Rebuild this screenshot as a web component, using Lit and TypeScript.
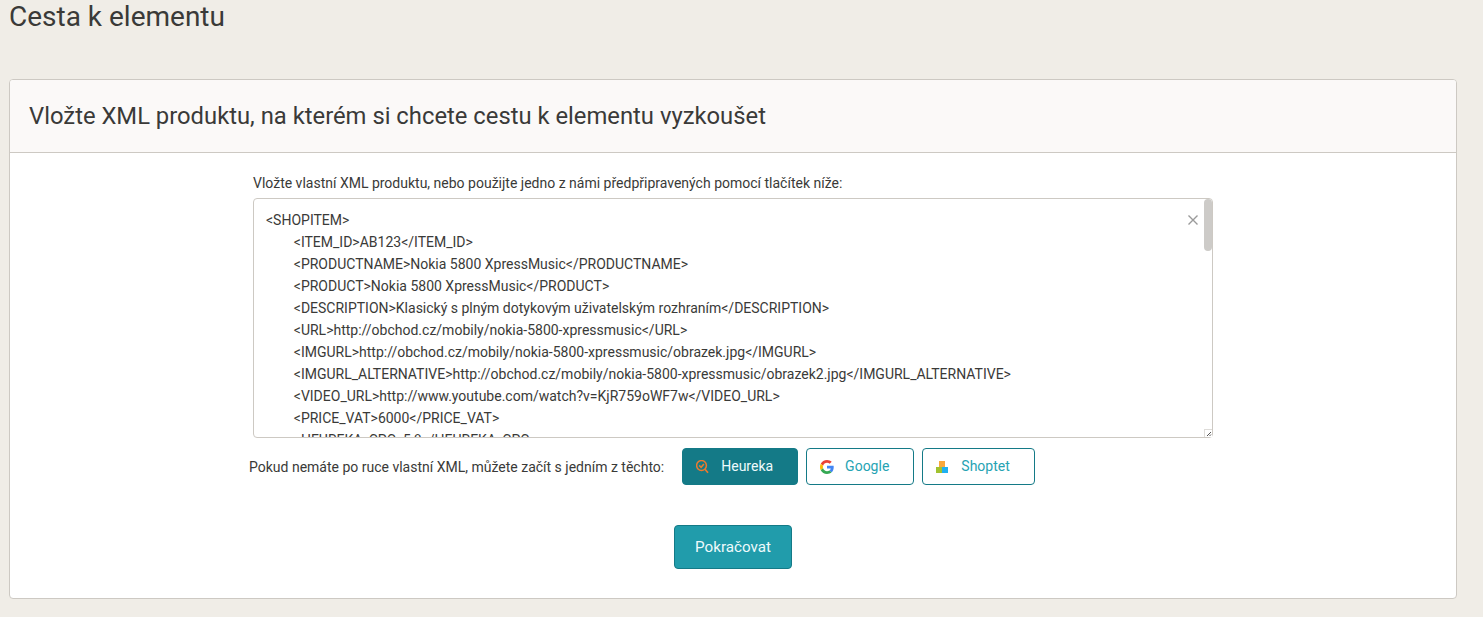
import { LitElement, html, css } from "lit";
import { customElement } from "lit/decorators.js";

const XML = `<SHOPITEM>
	<ITEM_ID>AB123</ITEM_ID>
	<PRODUCTNAME>Nokia 5800 XpressMusic</PRODUCTNAME>
	<PRODUCT>Nokia 5800 XpressMusic</PRODUCT>
	<DESCRIPTION>Klasický s plným dotykovým uživatelským rozhraním</DESCRIPTION>
	<URL>http://obchod.cz/mobily/nokia-5800-xpressmusic</URL>
	<IMGURL>http://obchod.cz/mobily/nokia-5800-xpressmusic/obrazek.jpg</IMGURL>
	<IMGURL_ALTERNATIVE>http://obchod.cz/mobily/nokia-5800-xpressmusic/obrazek2.jpg</IMGURL_ALTERNATIVE>
	<VIDEO_URL>http://www.youtube.com/watch?v=KjR759oWF7w</VIDEO_URL>
	<PRICE_VAT>6000</PRICE_VAT>
	<HEUREKA_CPC>5,8</HEUREKA_CPC>
	<MANUFACTURER>NOKIA</MANUFACTURER>
	<CATEGORYTEXT>Elektronika | Mobilní telefony</CATEGORYTEXT>
	<EAN>6417182041488</EAN>
	<DELIVERY_DATE>2</DELIVERY_DATE>
</SHOPITEM>`;

@customElement("app-root")
export class AppRoot extends LitElement {
  static styles = css`
    :host {
      display: block;
      height: 617px;
      overflow: hidden;
      background: #f0ede7;
      font-family: Roboto, sans-serif;
      font-size: 14px;
      color: #3a3a38;
      box-sizing: border-box;
      padding: 0 26px 0 9px;
    }
    h1 {
      margin: 0;
      height: 79px;
      font-size: 28px;
      font-weight: 400;
      line-height: 34px;
      color: #3a3a38;
    }
    .card {
      height: 520px;
      box-sizing: border-box;
      background: #fff;
      border: 1px solid #cdc9c3;
      border-radius: 4px;
      overflow: hidden;
    }
    .head {
      height: 73px;
      box-sizing: border-box;
      background: #fbf9f8;
      border-bottom: 1px solid #cdc9c3;
      padding: 0 19px;
      display: flex;
      align-items: center;
    }
    h2 {
      margin: 0;
      font-size: 23.8px;
      font-weight: 400;
      line-height: 32px;
      color: #3a3a38;
    }
    .body {
      display: flex;
      flex-direction: column;
      align-items: center;
    }
    .inner {
      width: 960px;
    }
    .label {
      display: block;
      height: 45px;
      line-height: 20px;
      padding-top: 20px;
      box-sizing: border-box;
    }
    .area {
      position: relative;
      height: 240px;
    }
    textarea {
      display: block;
      width: 100%;
      height: 100%;
      box-sizing: border-box;
      margin: 0;
      padding: 10px 12px;
      border: 1px solid #cdc9c3;
      border-radius: 4px;
      font: 14px/22px Roboto, sans-serif;
      color: #3a3a38;
      background: #fff;
      outline: none;
      resize: none;
      overflow: hidden;
    }
    .clear {
      position: absolute;
      top: 16px;
      right: 14px;
      width: 12px;
      height: 12px;
      display: block;
    }
    .thumb {
      position: absolute;
      top: 1px;
      right: 1px;
      width: 8px;
      height: 52px;
      background: #cdcbc8;
      border-radius: 4px;
    }
    .grip {
      position: absolute;
      right: 1px;
      bottom: 1px;
      width: 8px;
      height: 8px;
      box-sizing: border-box;
      background: #fff;
      border-left: 1px solid #dedcd9;
      border-top: 1px solid #dedcd9;
      display: block;
    }
    .row {
      display: flex;
      align-items: center;
      gap: 8px;
      margin: 10px 0 0 -4px;
    }
    .row span.text {
      margin-right: 10px;
    }
    .btn {
      height: 37px;
      box-sizing: border-box;
      display: inline-flex;
      align-items: center;
      gap: 11px;
      padding: 0 24px 0 13px;
      border: 1px solid #147a87;
      border-radius: 4px;
      background: #fff;
      color: #26a3b3;
      font: 14px Roboto, sans-serif;
    }
    .btn .lbl {
      position: relative;
      top: -1px;
    }
    .btn.active {
      background: #147a87;
      color: #eefafc;
    }
    .btn svg {
      width: 14px;
      height: 14px;
      display: block;
      flex: none;
    }
    .next {
      display: block;
      margin: 40px auto 0;
      width: 118px;
      height: 44px;
      box-sizing: border-box;
      border: 1px solid #147a87;
      border-radius: 4px;
      background: #219cab;
      color: #eefafc;
      font: 15.2px Roboto, sans-serif;
    }
  `;

  render() {
    return html`
      <h1>Cesta k elementu</h1>
      <section class="card">
        <div class="head"><h2>Vložte XML produktu, na kterém si chcete cestu k elementu vyzkoušet</h2></div>
        <div class="body">
          <div class="inner">
            <label class="label">Vložte vlastní XML produktu, nebo použijte jedno z námi předpřipravených pomocí tlačítek níže:</label>
            <div class="area">
              <textarea .value=${XML} spellcheck="false"></textarea>
              <svg class="clear" viewBox="0 0 12 12"><path d="M1.500 1.500l9 9M10.500 1.500l-9 9" stroke="#9a9a9a" stroke-width="1.400" fill="none"/></svg>
              <div class="thumb"></div>
              <svg class="grip" viewBox="0 0 7 7"><path d="M2 6l4-4M4.500 6l1.500-1.500" stroke="#555" stroke-width="1" fill="none"/></svg>
            </div>
            <div class="row">
              <span class="text">Pokud nemáte po ruce vlastní XML, můžete začít s jedním z těchto:</span>
              <button class="btn active">
                <svg viewBox="0 0 14 14" fill="none" stroke="#ee7a2d" stroke-width="1.500">
                  <circle cx="5.500" cy="5.500" r="4.900"/>
                  <path d="M9 9.300l3 3.400" stroke-width="1.700"/>
                  <path d="M3.200 5.400l1.900 1.900 2.800-3.400" />
                </svg>
                <span class="lbl">Heureka</span>
              </button>
              <button class="btn">
                <svg viewBox="0 0 48 48">
                  <path fill="#EA4335" d="M24 9.500c3.500 0 6.700 1.200 9.200 3.600l6.900-6.900C35.900 2.400 30.500 0 24 0 14.600 0 6.500 5.400 2.600 13.200l8 6.200C12.500 13.700 17.800 9.500 24 9.500z"/>
                  <path fill="#4285F4" d="M47 24.500c0-1.600-.1-3.100-.4-4.500H24v9h12.900c-.6 3-2.200 5.500-4.800 7.200l7.700 6c4.500-4.200 7.200-10.300 7.200-17.700z"/>
                  <path fill="#FBBC05" d="M10.600 28.600c-.5-1.500-.8-3-.8-4.600s.3-3.100.8-4.600l-8-6.200C.9 16.500 0 20.100 0 24s.9 7.500 2.600 10.800l8-6.200z"/>
                  <path fill="#34A853" d="M24 48c6.500 0 11.900-2.100 15.800-5.800l-7.700-6c-2.100 1.400-4.900 2.300-8.100 2.300-6.200 0-11.500-4.200-13.400-9.900l-8 6.200C6.500 42.600 14.600 48 24 48z"/>
                </svg>
                <span class="lbl">Google</span>
              </button>
              <button class="btn">
                <svg viewBox="0 0 14 14">
                  <rect x="3" y="1" width="6" height="6" fill="#f9a83c"/>
                  <rect x="0" y="7" width="6" height="6" fill="#a1c230"/>
                  <rect x="6" y="7" width="6" height="6" fill="#1fb0f0"/>
                </svg>
                <span class="lbl">Shoptet</span>
              </button>
            </div>
          </div>
          <button class="next">Pokračovat</button>
        </div>
      </section>
    `;
  }
}
